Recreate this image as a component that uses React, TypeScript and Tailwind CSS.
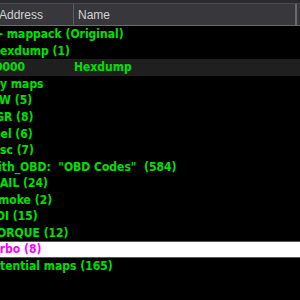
import React from "react";

type Row = { text: string; off: string; kind?: "dark" | "sel"; name?: string };

const rows: Row[] = [
  { text: "- mappack (Original)", off: "ml-[-1.4px]" },
  { text: "Hexdump (1)", off: "ml-[-9px]" },
  { text: "0000", off: "ml-[-5px]", kind: "dark", name: "Hexdump" },
  { text: "My maps", off: "ml-[-10.7px]" },
  { text: "SW (5)", off: "ml-[-8.7px]" },
  { text: "EGR (8)", off: "ml-[-12.2px]" },
  { text: "Fuel (6)", off: "ml-[-13.9px]" },
  { text: "Misc (7)", off: "ml-[-14.4px]" },
  { text: 'With_OBD:  "OBD Codes"  (584)', off: "ml-[-13.8px]" },
  { text: "RAIL (24)", off: "ml-[-8.3px]" },
  { text: "Smoke (2)", off: "ml-[-9.7px]" },
  { text: "SOI (15)", off: "ml-[-12px]" },
  { text: "TORQUE (12)", off: "ml-[-10.3px]" },
  { text: "Turbo (8)", off: "ml-[-14px]", kind: "sel" },
  { text: "Potential maps (165)", off: "ml-[-15.3px]" },
];

export default function App() {
  return (
    <div className="w-[300px] h-[300px] bg-black overflow-hidden font-['Liberation_Sans',Arial,sans-serif]">
      <div className="h-[3px] bg-[#2b2b2e]" />
      <div className="h-px bg-[#4c4c50]" />
      <div className="h-[21px] bg-[#38383c] flex text-[12px] text-[#d2d2d2]">
        <div className="w-[73px] flex items-center overflow-hidden">
          <span className="ml-[-1px] whitespace-nowrap">Address</span>
        </div>
        <div className="w-[1px] bg-[#5c5c60]" />
        <div className="w-[221px] flex items-center overflow-hidden">
          <span className="ml-[4px] whitespace-nowrap">Name</span>
        </div>
        <div className="w-[2px] bg-[#6a6a6e]" />
        <div className="flex-1" />
      </div>
      <div className="h-px bg-[#6b6b6b]" />
      <div className="flex flex-col font-['DejaVu_Sans_Condensed','DejaVu_Sans',sans-serif]">
        {rows.map((r, i) => {
          const base = "h-[16.55px] flex items-center overflow-hidden whitespace-pre text-[12px] font-bold leading-none";
          if (r.kind === "sel") {
            return (
              <div key={i} className={base + " bg-white border-y border-[#5a5a5a] text-[#ff00ff]"}>
                <span className={r.off}>{r.text}</span>
              </div>
            );
          }
          if (r.kind === "dark") {
            return (
              <div key={i} className={base + " bg-[#1f1f1f] text-[#00e000]"}>
                <span className={"w-[79px] shrink-0 " + r.off}>{r.text}</span>
                <span>{r.name}</span>
              </div>
            );
          }
          return (
            <div key={i} className={base + " text-[#00e000]"}>
              <span className={r.off}>{r.text}</span>
            </div>
          );
        })}
      </div>
    </div>
  );
}
